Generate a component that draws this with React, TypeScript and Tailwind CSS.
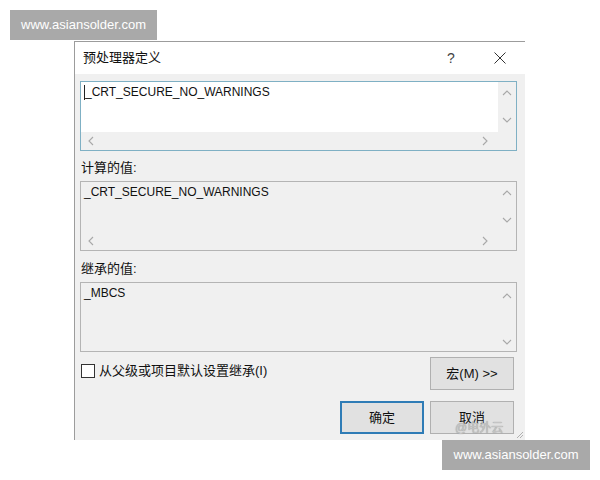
import React from "react";

const SANS = "font-['Liberation_Sans','Noto_Sans_CJK_SC',sans-serif]";

function Chevron({ dir }: { dir: "up" | "down" | "left" | "right" }) {
  const d =
    dir === "up"
      ? "M1 6 L5 2 L9 6"
      : dir === "down"
      ? "M1 2 L5 6 L9 2"
      : dir === "left"
      ? "M6 1 L2 5 L6 9"
      : "M2 1 L6 5 L2 9";
  return (
    <svg width="10" height="10" viewBox="0 0 10 10" className="block">
      <path d={d} fill="none" stroke="#a8a8a8" strokeWidth="1.1" />
    </svg>
  );
}

function ListBox({
  text,
  focused,
  hScroll,
}: {
  text: string;
  focused?: boolean;
  hScroll?: boolean;
}) {
  return (
    <div
      className={`h-[70px] flex flex-col border ${
        focused ? "border-[#7fb0c4]" : "border-[#b4b4b4]"
      }`}
    >
      <div className="flex flex-1 min-h-0">
        <div
          className={`flex-1 flex items-start pl-[3px] pt-[2px] text-[12px] leading-[17px] text-[#111] ${
            focused ? "bg-white" : "bg-[#f0f0f0]"
          }`}
        >
          {focused && <span className="w-px h-[15px] bg-[#222] mt-[1px]" />}
          <span>{text}</span>
        </div>
        <div
          className={`w-[18px] flex flex-col items-center ${
            hScroll ? "pt-[7px] justify-between pb-[6px]" : "pt-[9px] justify-between pb-[3px]"
          }`}
        >
          <Chevron dir="up" />
          <Chevron dir="down" />
        </div>
      </div>
      {hScroll && (
        <div className="h-[18px] flex">
          <div className="flex-1 flex items-center justify-between pl-[6px] pr-[7px]">
            <Chevron dir="left" />
            <Chevron dir="right" />
          </div>
          <div className="w-[18px]" />
        </div>
      )}
    </div>
  );
}

function Button({ label, primary }: { label: string; primary?: boolean }) {
  return (
    <div
      className={`w-[84px] h-[33px] flex items-center justify-center text-[13px] text-[#111] bg-[#e1e1e1] ${
        primary ? "border-2 border-[#2f7cb6]" : "border border-[#b0b0b0]"
      }`}
    >
      {label}
    </div>
  );
}

export default function App() {
  return (
    <div className={`relative w-[600px] h-[480px] bg-white overflow-hidden pt-[41px] ${SANS}`}>
      <div className="absolute left-[10px] top-[10px] w-[147px] h-[30px] bg-[#a9a9a9] flex items-center justify-center text-white text-[13px]">
        www.asiansolder.com
      </div>

      <div className="relative ml-[74px] w-[451px] h-[399px] bg-[#f0f0f0] border-t border-l border-[#9c9c9c] flex flex-col">
        <div className="h-[32px] bg-white flex items-center pl-[8px] text-[13px] text-[#111]">
          <span className="flex-1">预处理器定义</span>
          <span className="w-[20px] text-center text-[14px] text-[#444] mr-[33px]">?</span>
          <svg width="12" height="12" viewBox="0 0 12 12" className="mr-[19px]">
            <path d="M0.5 0.5 L11.5 11.5 M11.5 0.5 L0.5 11.5" stroke="#333" strokeWidth="1" />
          </svg>
        </div>

        <div className="flex flex-col pl-[5px] pr-[8px] pt-[7px]">
          <ListBox text="_CRT_SECURE_NO_WARNINGS" focused hScroll />
          <div className="text-[13px] text-[#111] leading-[18px] mt-[8px] h-[22px] pl-px">计算的值:</div>
          <ListBox text="_CRT_SECURE_NO_WARNINGS" hScroll />
          <div className="text-[13px] text-[#111] leading-[18px] mt-[9px] h-[22px] pl-px">继承的值:</div>
          <ListBox text="_MBCS" />

          <div className="flex items-center mt-[5px] mr-[3px]">
            <div className="flex-1 flex items-center pl-[1px] pb-[6px]">
              <div className="w-[14px] h-[14px] border border-[#333] bg-white" />
              <span className="ml-[4px] text-[13px] text-[#111]">从父级或项目默认设置继承(I)</span>
            </div>
            <Button label="宏(M) >>" />
          </div>

          <div className="flex justify-end gap-[6px] mt-[11px] mr-[3px]">
            <Button label="确定" primary />
            <Button label="取消" />
          </div>
        </div>

        <div className="absolute left-[380px] top-[379px] text-[12px] leading-[14px] text-[#c4c4c4] [text-shadow:0_0_1px_#888]">
          @电外云
        </div>
        <svg width="8" height="8" viewBox="0 0 8 8" className="absolute right-[1px] bottom-[1px]">
          <path d="M7 1 L1 7 M7 4 L4 7" stroke="#b0b0b0" strokeWidth="1" />
        </svg>
      </div>

      <div className="absolute left-[442px] top-[440px] w-[148px] h-[30px] bg-[#a9a9a9] flex items-center justify-center text-white text-[13px]">
        www.asiansolder.com
      </div>
    </div>
  );
}
